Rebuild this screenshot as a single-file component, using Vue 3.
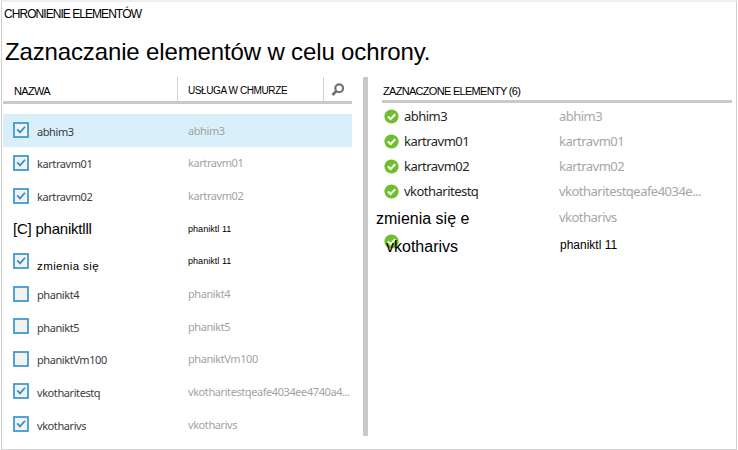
<script setup>
const items = [
  { name: 'abhim3', service: 'abhim3', checked: true, active: true },
  { name: 'kartravm01', service: 'kartravm01', checked: true },
  { name: 'kartravm02', service: 'kartravm02', checked: true },
  { name: '[C] phaniktlll', service: 'phaniktl 11', wide: true, dark: true },
  { name: 'zmienia się', service: 'phaniktl 11', checked: true, dark: true, low: true },
  { name: 'phanikt4', service: 'phanikt4' },
  { name: 'phanikt5', service: 'phanikt5' },
  { name: 'phaniktVm100', service: 'phaniktVm100' },
  { name: 'vkotharitestq', service: 'vkotharitestqeafe4034ee4740a4...', checked: true },
  { name: 'vkotharivs', service: 'vkotharivs', checked: true },
]

const selected = [
  { name: 'abhim3', service: 'abhim3', icon: true },
  { name: 'kartravm01', service: 'kartravm01', icon: true },
  { name: 'kartravm02', service: 'kartravm02', icon: true },
  { name: 'vkotharitestq', service: 'vkotharitestqeafe4034e...', icon: true },
  { name: 'zmienia się e', service: 'vkotharivs', kind: 'changed' },
  { name: 'vkotharivs', service: 'phaniktl 11', icon: true, kind: 'overlap' },
]
</script>

<template>
  <main class="dialog">
    <div class="crumb"><span>CHRONIENIE ELEMENTÓW</span></div>
    <h1 class="title">Zaznaczanie elementów w celu ochrony.</h1>
    <div class="panes">
      <section class="left">
        <header class="head">
          <div class="col-name"><span>NAZWA</span></div>
          <div class="col-service"><span>USŁUGA W CHMURZE</span></div>
          <div class="col-search">
            <svg width="14" height="14" viewBox="0 0 14 14">
              <circle cx="8.2" cy="5.2" r="3.9" fill="none" stroke="#70757a" stroke-width="2.2" />
              <path d="M5.3 8.2 L1.4 12.1" stroke="#70757a" stroke-width="2.8" />
            </svg>
          </div>
        </header>
        <div class="rows">
          <div
            v-for="(item, i) in items"
            :key="i"
            class="row"
            :class="{ active: item.active, wide: item.wide, dark: item.dark, low: item.low }"
          >
            <svg v-if="!item.wide" class="check" width="16" height="16" viewBox="0 0 16 16">
              <rect x="1" y="1" width="14" height="14" fill="#f2f2f2" stroke="#3f9bd1" stroke-width="1.8" />
              <path v-if="item.checked" d="M4.2 7.4 L7 10.4 L12 4.8" fill="none" stroke="#2e8fcb" stroke-width="1.7" />
            </svg>
            <span class="name">{{ item.name }}</span>
            <span class="service">{{ item.service }}</span>
          </div>
        </div>
      </section>
      <div class="divider"></div>
      <section class="right">
        <header class="head2"><span>ZAZNACZONE ELEMENTY (6)</span></header>
        <div class="picks">
          <div v-for="(item, i) in selected" :key="i" class="pick" :class="item.kind">
            <svg v-if="item.icon" class="ok" width="15" height="15" viewBox="0 0 15 15">
              <circle cx="7.5" cy="7.5" r="7.1" fill="#6fbe2c" />
              <path d="M3.9 7.5 L6.6 10.1 L11.2 5.2" fill="none" stroke="#fff" stroke-width="2.1" />
            </svg>
            <span class="name">{{ item.name }}</span>
            <span class="service">{{ item.service }}</span>
          </div>
        </div>
      </section>
    </div>
  </main>
</template>

<style>
body {
  margin: 0;
  background: #fff;
}
</style>

<style scoped>
.dialog {
  box-sizing: border-box;
  width: 736px;
  height: 450px;
  margin-left: 1px;
  border: 1px solid #cfcfcf;
  border-top: 2px solid #eee;
  border-bottom-color: #d8d8d8;
  background: #fff;
  color: #000;
  font-family: "Liberation Sans", Arial, sans-serif;
  white-space: nowrap;
  overflow: hidden;
}
.crumb {
  height: 24px;
  padding-left: 2px;
  font-size: 12px;
  line-height: 24px;
  letter-spacing: -0.95px;
}
.title {
  height: 51px;
  margin: 0;
  padding-left: 3px;
  font-size: 24px;
  font-weight: 400;
  line-height: 51px;
  letter-spacing: -0.14px;
}
.panes {
  display: flex;
  height: 359px;
  padding-left: 1px;
}
.left {
  width: 349px;
}
.head {
  box-sizing: border-box;
  display: grid;
  grid-template-columns: 174px 146px 29px;
  grid-template-rows: 24px;
  height: 27px;
  border-bottom: 3px solid #c9c9c9;
  line-height: 28px;
}
.col-name {
  padding-left: 11px;
  font-size: 11px;
  letter-spacing: -0.7px;
}
.col-service {
  padding-left: 10px;
  border-left: 1px solid #d0d0d0;
  font-size: 10px;
  letter-spacing: -0.4px;
}
.col-search {
  display: flex;
  padding: 6px 0 0 7px;
  border-left: 1px solid #d0d0d0;
}
.rows {
  display: grid;
  grid-auto-rows: 32.65px;
  padding-top: 10px;
}
.row {
  display: grid;
  grid-template-columns: 24px 151px 1fr;
  align-items: center;
  padding-left: 10px;
  font-family: "Noto Sans", sans-serif;
  font-size: 11px;
  letter-spacing: -0.42px;
}
.row.active {
  background: #d9effa;
}
.row .name {
  padding-top: 2px;
  color: #3c3c3c;
}
.row .service {
  color: #a3a3a3;
}
.row.wide {
  grid-template-columns: 175px 1fr;
}
.row.dark {
  font-family: "Liberation Sans", Arial, sans-serif;
}
.row.dark .name,
.row.dark .service {
  color: #000;
}
.row.dark .service {
  padding-top: 1px;
  font-size: 9px;
  letter-spacing: 0.05px;
}
.row.wide .name {
  padding-top: 0;
  font-size: 15px;
  letter-spacing: -0.22px;
}
.row.low .name {
  padding-top: 10px;
  font-size: 11.5px;
  letter-spacing: 0.4px;
}
.divider {
  width: 5px;
  margin-left: 11px;
  background: #c9c9c9;
}
.right {
  width: 350px;
  margin-left: 14px;
}
.head2 {
  box-sizing: border-box;
  height: 26px;
  padding-left: 1px;
  border-bottom: 3px solid #c9c9c9;
  font-size: 11px;
  line-height: 28px;
  letter-spacing: -0.7px;
}
.picks {
  display: grid;
  grid-auto-rows: 25px;
  padding-top: 1px;
}
.pick {
  display: grid;
  grid-template-columns: 22px 155px 1fr;
  align-items: center;
  font-family: "Noto Sans", sans-serif;
  font-size: 13px;
  line-height: 17px;
  letter-spacing: -0.52px;
}
.ok {
  margin: 0 0 1px 2px;
}
.pick .name {
  color: #262626;
}
.pick .service {
  color: #a6a6a6;
}
.pick.changed .name {
  grid-column: 1 / 3;
  margin-left: -6px;
  padding-top: 4px;
  color: #000;
  font-family: "Liberation Sans", Arial, sans-serif;
  font-size: 16px;
  letter-spacing: 0;
}
.pick.changed .service {
  padding-top: 2px;
}
.pick.overlap {
  font-family: "Liberation Sans", Arial, sans-serif;
}
.pick.overlap .name {
  position: relative;
  margin-left: -18px;
  padding-top: 9px;
  color: #000;
  font-size: 16px;
  letter-spacing: 0;
}
.pick.overlap .ok {
  margin-bottom: 2px;
}
.pick.overlap .service {
  padding-top: 6px;
  margin-left: 1px;
  color: #000;
  font-size: 12px;
  letter-spacing: 0;
}
</style>
